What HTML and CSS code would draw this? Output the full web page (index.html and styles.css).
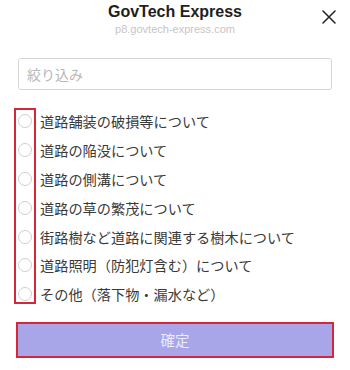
FILE: index.html
```html
<!DOCTYPE html>
<html lang="ja">
<head>
<meta charset="utf-8">
<link rel="stylesheet" href="styles.css">
</head>
<body>
<div class="sheet">
  <header class="header">
    <div class="spacer"></div>
    <div class="titles">
      <div class="title">GovTech Express</div>
      <div class="url">p8.govtech-express.com</div>
    </div>
    <div class="close">
      <svg width="14" height="14" viewBox="0 0 14 14"><path d="M1 1 L13 13 M13 1 L1 13" stroke="#222" stroke-width="1.5" stroke-linecap="round" fill="none"/></svg>
    </div>
  </header>
  <div class="search"><span class="placeholder">絞り込み</span></div>
  <div class="list">
    <div class="row"><span class="radio"></span><span class="label">道路舗装の破損等について</span></div>
    <div class="row"><span class="radio"></span><span class="label">道路の陥没について</span></div>
    <div class="row"><span class="radio"></span><span class="label">道路の側溝について</span></div>
    <div class="row"><span class="radio"></span><span class="label">道路の草の繁茂について</span></div>
    <div class="row"><span class="radio"></span><span class="label">街路樹など道路に関連する樹木について</span></div>
    <div class="row"><span class="radio"></span><span class="label">道路照明（防犯灯含む）について</span></div>
    <div class="row"><span class="radio"></span><span class="label">その他（落下物・漏水など）</span></div>
    <div class="highlight"></div>
  </div>
  <div class="confirm">確定</div>
</div>
</body>
</html>
```
FILE: styles.css
```css
html, body {
  margin: 0;
  padding: 0;
  background: #fff;
}
body {
  font-family: "Noto Sans CJK JP", "Noto Sans", sans-serif;
  color: #333;
}
.sheet {
  width: 350px;
  height: 370px;
  overflow: hidden;
}
.header {
  height: 46px;
  display: grid;
  grid-template-columns: 50px 1fr 50px;
}
.titles {
  text-align: center;
  padding-top: 2px;
}
.title {
  font-family: "Liberation Sans", Arial, sans-serif;
  font-weight: bold;
  font-size: 16px;
  line-height: 20px;
  color: #1e1e1e;
}
.url {
  font-family: "Liberation Sans", Arial, sans-serif;
  font-size: 11px;
  line-height: 12px;
  color: #c6c6c6;
  margin-top: 1px;
}
.close {
  display: flex;
  justify-content: flex-end;
  padding: 10px 14px 0 0;
}
.close svg {
  display: block;
}
.search {
  margin: 12px 18px 0 18px;
  height: 32px;
  box-sizing: border-box;
  border: 1px solid #d6d6d6;
  border-radius: 3px;
  display: flex;
  align-items: center;
  padding-left: 8px;
}
.placeholder {
  font-size: 14px;
  color: #b8b8b8;
}
.list {
  position: relative;
  margin-top: 17px;
  display: flex;
  flex-direction: column;
}
.row {
  height: 28.8px;
  display: flex;
  align-items: center;
}
.radio {
  width: 12px;
  height: 12px;
  border: 1px solid #cfcfcf;
  border-radius: 50%;
  margin-left: 18px;
  margin-right: 8px;
  flex: none;
}
.label {
  font-size: 14.2px;
  color: #3a3a3a;
  white-space: nowrap;
}
.highlight {
  position: absolute;
  left: 14px;
  top: 1px;
  width: 22px;
  height: 196px;
  box-sizing: border-box;
  border: 2px solid #d3283a;
}
.confirm {
  margin: 13px 16px 0 16px;
  height: 36px;
  box-sizing: border-box;
  border: 2px solid #d3283a;
  background: #a8a6e9;
  color: #ececfa;
  font-size: 14.5px;
  display: flex;
  align-items: center;
  justify-content: center;
}
```
